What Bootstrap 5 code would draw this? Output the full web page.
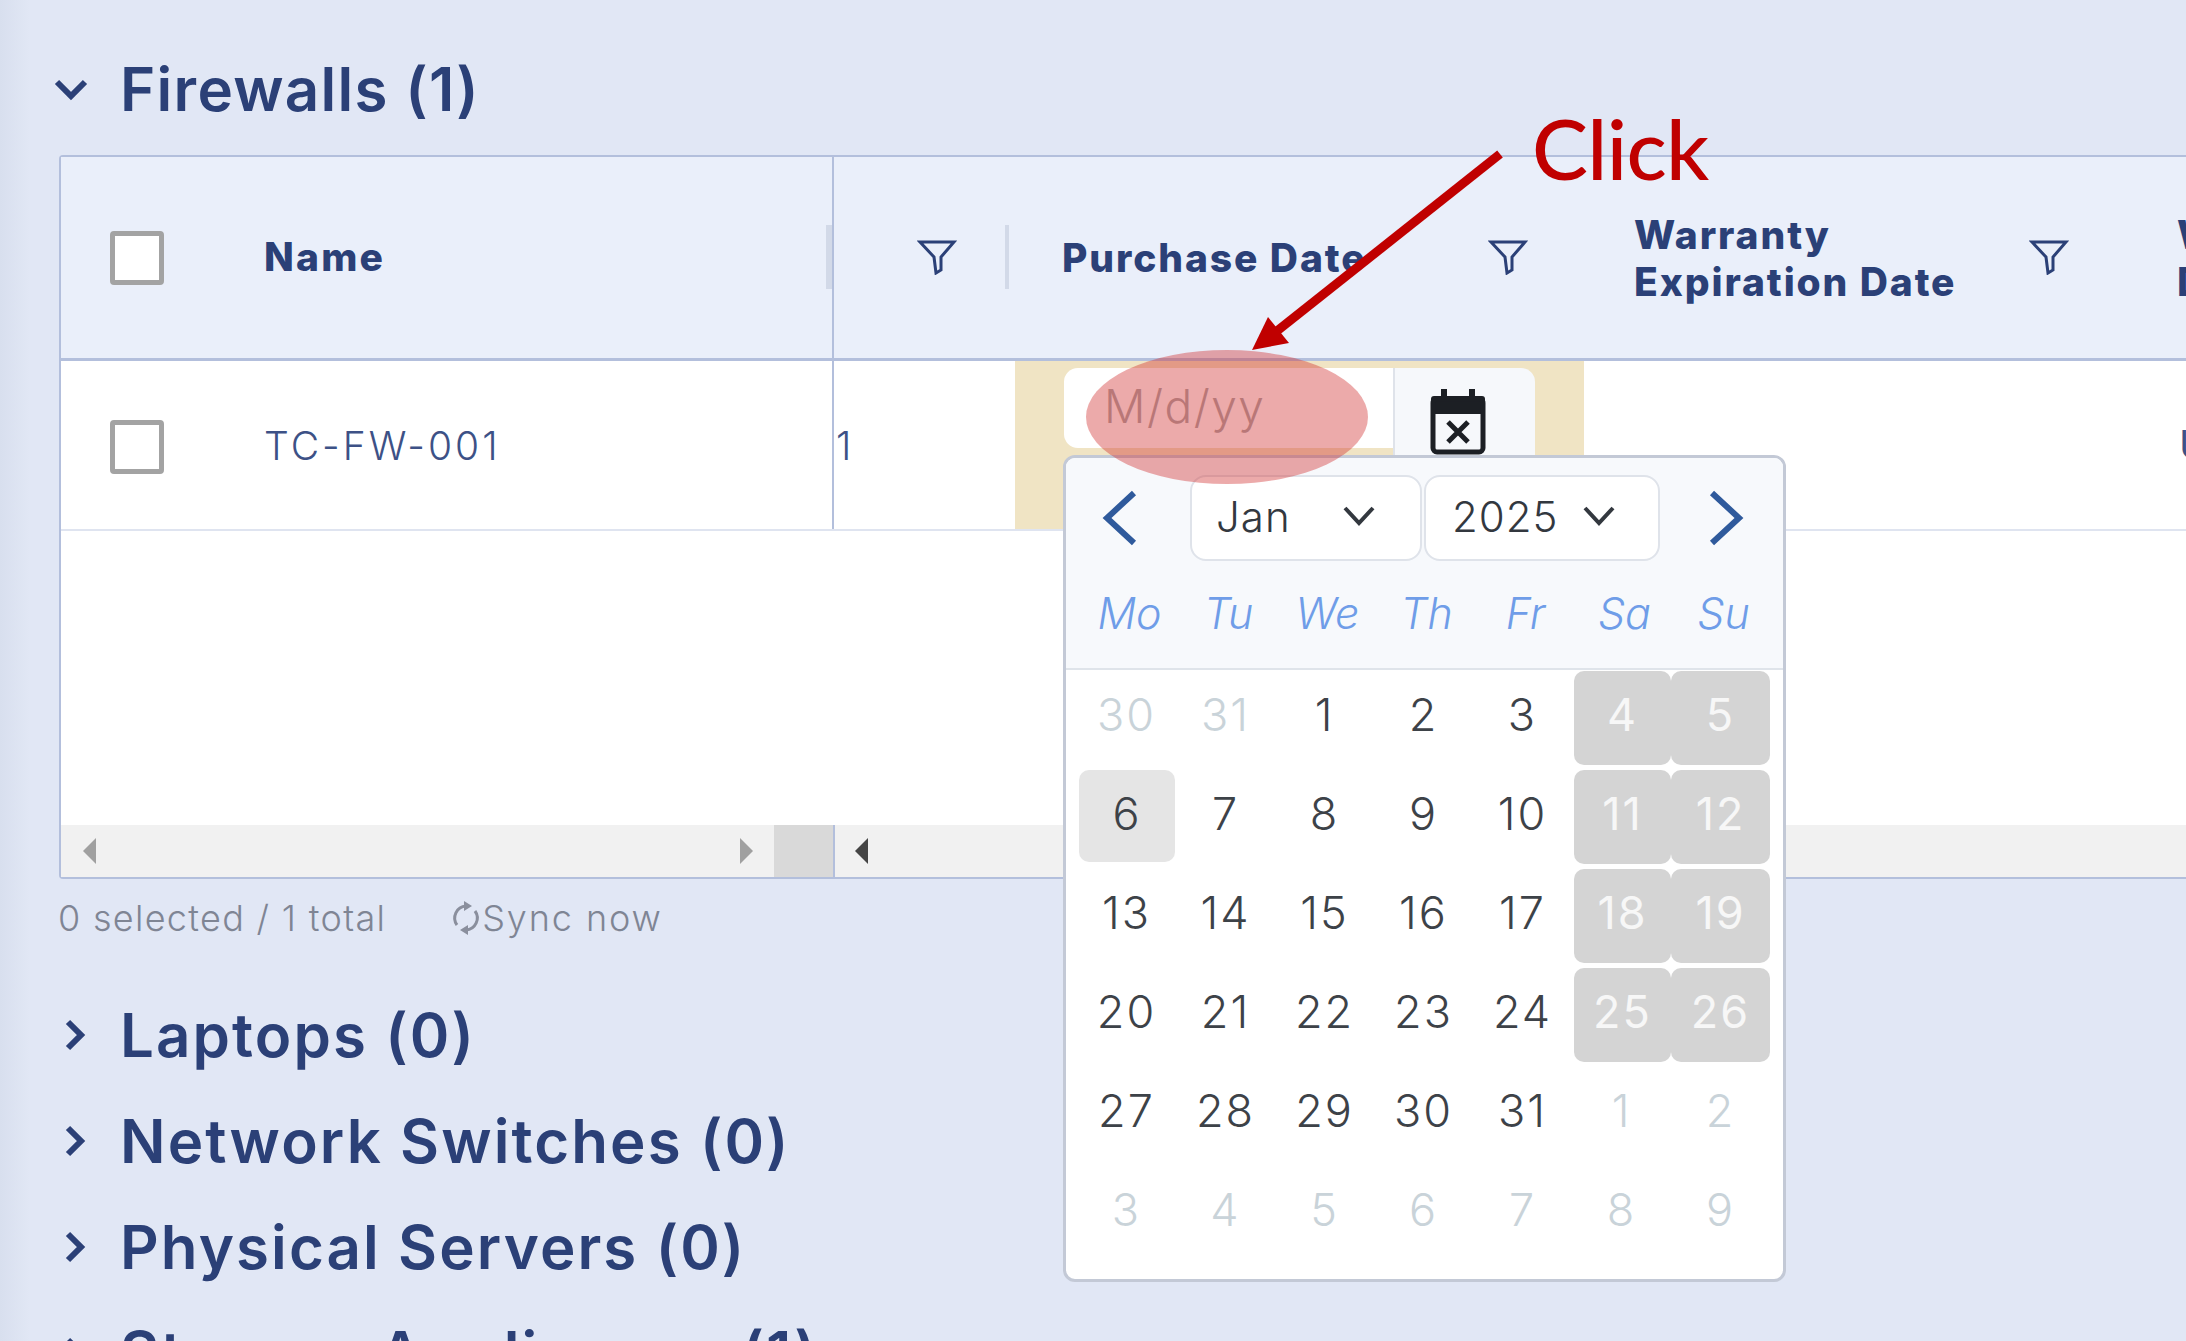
<!DOCTYPE html>
<html lang="en"><head><meta charset="utf-8"><title>Assets</title>
<link href="https://cdn.jsdelivr.net/npm/bootstrap@5.3.0/dist/css/bootstrap.min.css" rel="stylesheet">
<style>
html,body{height:100%}
body{margin:0;overflow:hidden;background:#e1e7f5;font-family:Inter,"Liberation Sans",sans-serif;color:#2b3f77}
.pagewrap{position:relative;width:2186px;height:1341px;overflow:hidden;background:linear-gradient(90deg,#d8dfee 0,#e1e7f5 30px)}
.content{padding:53px 0 0 59px}
.sec-title{font-size:60px;font-weight:600;line-height:72px;height:72px;color:#2b4077;letter-spacing:1.3px;margin-left:-5px;gap:32px;white-space:nowrap}
.chev{width:34px;flex:none}
.asset-grid{width:2300px;height:724px;background:#fff;border:2px solid #b3bfdc;border-right:0;border-radius:4px 0 0 4px;display:flex;flex-direction:column;margin-top:30px}
.ghead{height:204px;background:#eaeffa;border-bottom:3px solid #b3bfdc;display:flex;flex:none}
.grow-r{height:170px;border-bottom:2px solid #dfe4f0;display:flex;flex:none;font-size:39px}
.gbody{flex:1}
.gscroll{height:52px;background:#f1f1f1;display:flex;flex:none;align-items:center}
.c-fix{width:773px;flex:none;border-right:2px solid #b3bfdc;height:100%;display:flex;align-items:center;position:relative}
.grow-r .c-fix,.cell-one{padding-top:3px}
.tick{width:54px;height:54px;border:5px solid #a3a3a3;border-radius:4px;background:#fff;margin-left:49px;flex:none}
.hname{font-size:39px;font-weight:800;color:#2b4077;letter-spacing:2.2px;margin-left:100px}
.rname{font-size:39px;color:#3d5186;margin-left:100px;letter-spacing:3px;font-weight:300}
.rz{position:absolute;right:0;top:68px;width:6px;height:64px;background:#d2d9e8}
.hcell{height:100%;display:flex;align-items:center;flex:none;position:relative;font-size:39px;font-weight:800;color:#2b4077;line-height:47px;letter-spacing:1.9px;white-space:nowrap}
.rz2{position:absolute;left:171px;top:68px;width:4px;height:64px;background:#d2d9e8}
.c-a{width:175px}.c-p{width:572px;padding-left:53px}.c-w{width:562px;padding-left:53px}
.funnel{position:absolute;top:82px;width:40px;height:36px}
.c-a .funnel{left:83px}.c-p .funnel{left:479px}.c-w .funnel{left:448px}
.frag{margin-left:34px}
.cell-one{width:181px;color:#3d5186;display:flex;align-items:center;padding-left:2px;flex:none;font-weight:300}
.date-cell{width:569px;background:#f0e4c4;flex:none;padding:7px 0 0 49px;position:relative}
.dinput{width:471px;display:flex;align-items:flex-start}
.dinput span{flex:1;height:80px;font-size:46px;padding-left:40px;line-height:76px;color:#aaa;letter-spacing:1.5px;background:#fff;border-radius:14px 0 0 14px;font-weight:300}
.dbtn{width:142px;height:100px;background:#f6f8fb;border-left:2px solid #dfe3ea;border-radius:0 14px 0 0;display:flex;justify-content:center;padding:21px 14px 0 0;flex:none}
.ufrag{margin-left:595px;display:flex;align-items:center;color:#3d5186;width:400px}
.sb-l{width:713px;flex:none;display:flex;align-items:center;justify-content:space-between;padding:0 21px 0 22px}
.sb-thumb{width:59px;background:#d9d9d9;height:100%;flex:none}
.sb-div{width:2px;height:100%;background:#b3bfdc;flex:none}
.tri{width:0;height:0;border-top:13px solid transparent;border-bottom:13px solid transparent}
.tl{border-right:13px solid #a0a0a0}.tr{border-left:13px solid #a0a0a0}.td{border-right:13px solid #454545;margin-left:20px}
.statusline{font-size:36px;color:#7f8594;display:flex;height:48px;align-items:center;margin:15px 0 0 -1px;letter-spacing:1.3px;font-weight:300}
.sync{margin-left:65px;display:flex;align-items:center;gap:1px;letter-spacing:1.9px}
.collapsed-list{margin-top:40px}
.collapsed-list .sec-title{height:106px;line-height:106px;letter-spacing:2.1px}
.collapsed-list .chev{margin-left:3px;margin-right:-3px}
.cal{position:absolute;left:1063px;top:455px;width:723px;height:827px;background:#fff;border:3px solid #c3c9d6;border-radius:12px;overflow:hidden;z-index:3}
.cal-top{background:#f7f9fc;height:212px;border-bottom:2px solid #dfe4ea;padding:17px 0 0}
.cal-nav{display:flex;align-items:center;height:86px}
.sel{height:86px;background:#fff;border:2px solid #dfe3ea;border-radius:16px;display:flex;align-items:center;justify-content:space-between;font-size:42px;color:#33383f;flex:none;font-weight:300;letter-spacing:1px}
.s-m{width:232px;padding:0 44px 4px 24px}
.s-y{width:236px;margin-left:2px;padding:0 42px 4px 26px}
.arrow{flex:none;display:flex}
.a-prev{width:124px;padding-left:34px}.a-next{width:129px;padding-left:46px}
.wk{display:grid;grid-template-columns:repeat(7,99px);padding:26px 0 0 14px;font-size:43px;font-style:italic;color:#6f9de8;text-align:center;font-weight:300;line-height:52px}
.days{display:grid;grid-template-columns:repeat(7,99px);grid-auto-rows:99px;padding:0 0 0 11px;font-size:45px;color:#3d4248;text-align:center;font-weight:300}
.days div{height:92px;line-height:88px;border-radius:10px;margin:1px 1px 0 1px;letter-spacing:2px}
.days .off{color:#c9d3d9}.days .we{background:#d4d4d4;color:#f7f7f7;font-weight:400;margin-left:0;margin-right:0;height:94px}
.days .we:nth-child(7n+6){margin-left:2px}
.days .now{background:#e5e5e5;margin-left:2px}
.anno{position:absolute;left:0;top:0;z-index:5;pointer-events:none}
.click-t{position:absolute;left:1532px;top:98px;font-family:Lato,"Liberation Sans",sans-serif;font-size:84px;line-height:100px;color:#c00000;z-index:6;font-weight:500;letter-spacing:-.7px}
</style></head><body>
<div class="pagewrap">
<div class="content">
 <div class="sec-title d-flex align-items-center"><svg class="chev" viewBox="0 0 34 24" height="24"><path d="M3 5 17 19 31 5" fill="none" stroke="#2b4077" stroke-width="6"/></svg><span>Firewalls (1)</span></div>
 <div class="asset-grid">
  <div class="ghead">
   <div class="c-fix"><span class="tick"></span><span class="hname">Name</span><i class="rz"></i></div>
   <div class="hcell c-a"><svg class="funnel" viewBox="0 0 40 36"><path d="M3 3H37L24 18V31L19 34 17 18Z" fill="none" stroke="#2b4077" stroke-width="3"/></svg><i class="rz2"></i></div>
   <div class="hcell c-p">Purchase Date<svg class="funnel" viewBox="0 0 40 36"><path d="M3 3H37L24 18V31L19 34 17 18Z" fill="none" stroke="#2b4077" stroke-width="3"/></svg></div>
   <div class="hcell c-w"><span>Warranty<br>Expiration Date</span><svg class="funnel" viewBox="0 0 40 36"><path d="M3 3H37L24 18V31L19 34 17 18Z" fill="none" stroke="#2b4077" stroke-width="3"/></svg></div>
   <div class="hcell"><span class="frag">Warranty<br>Days</span></div>
  </div>
  <div class="grow-r">
   <div class="c-fix"><span class="tick"></span><span class="rname">TC-FW-001</span></div>
   <div class="cell-one">1</div>
   <div class="date-cell"><div class="dinput"><span>M/d/yy</span><div class="dbtn"><svg width="58" height="66" viewBox="0 0 58 66"><rect x="12" y="0" width="6" height="12" fill="#1c1f24"/><rect x="40" y="0" width="6" height="12" fill="#1c1f24"/><rect x="2" y="7" width="54" height="18" rx="3" fill="#1c1f24"/><rect x="4" y="10" width="50" height="53" rx="4" fill="none" stroke="#1c1f24" stroke-width="5"/><path d="M19 33 39 53M39 33 19 53" stroke="#1c1f24" stroke-width="5"/></svg></div></div></div>
   <div class="ufrag">U</div>
  </div>
  <div class="gbody"></div>
  <div class="gscroll">
   <div class="sb-l"><i class="tri tl"></i><i class="tri tr"></i></div><div class="sb-thumb"></div>
   <div class="sb-div"></div><i class="tri td"></i>
  </div>
 </div>
 <div class="statusline"><span>0 selected / 1 total</span><span class="sync"><svg width="30" height="34" viewBox="0 0 30 34"><path d="M6 24A12 12 0 0 1 15 5M24 10A12 12 0 0 1 15 29" fill="none" stroke="#8a8f9d" stroke-width="3"/><path d="M13 0 21 5 13 10ZM17 24 9 29 17 34Z" fill="#8a8f9d"/></svg>Sync now</span></div>
 <div class="collapsed-list">
  <div class="sec-title d-flex align-items-center"><svg class="chev" viewBox="0 0 34 34" height="34"><path d="M11 4 24 17 11 30" fill="none" stroke="#2b4077" stroke-width="6"/></svg><span>Laptops (0)</span></div>
  <div class="sec-title d-flex align-items-center"><svg class="chev" viewBox="0 0 34 34" height="34"><path d="M11 4 24 17 11 30" fill="none" stroke="#2b4077" stroke-width="6"/></svg><span>Network Switches (0)</span></div>
  <div class="sec-title d-flex align-items-center"><svg class="chev" viewBox="0 0 34 34" height="34"><path d="M11 4 24 17 11 30" fill="none" stroke="#2b4077" stroke-width="6"/></svg><span>Physical Servers (0)</span></div>
  <div class="sec-title d-flex align-items-center"><svg class="chev" viewBox="0 0 34 34" height="34"><path d="M11 4 24 17 11 30" fill="none" stroke="#2b4077" stroke-width="6"/></svg><span>Storage Appliances (1)</span></div>
 </div>
</div>
<div class="cal">
 <div class="cal-top">
  <div class="cal-nav">
   <div class="arrow a-prev"><svg width="40" height="56" viewBox="0 0 40 56"><path d="M34 3 7 28 34 53" fill="none" stroke="#2f5a9c" stroke-width="6"/></svg></div>
   <div class="sel s-m"><span>Jan</span><svg width="34" height="22" viewBox="0 0 34 22"><path d="M3 3 17 18 31 3" fill="none" stroke="#33383f" stroke-width="4"/></svg></div>
   <div class="sel s-y"><span>2025</span><svg width="34" height="22" viewBox="0 0 34 22"><path d="M3 3 17 18 31 3" fill="none" stroke="#33383f" stroke-width="4"/></svg></div>
   <div class="arrow a-next"><svg width="40" height="56" viewBox="0 0 40 56"><path d="M6 3 33 28 6 53" fill="none" stroke="#2f5a9c" stroke-width="6"/></svg></div>
  </div>
  <div class="wk"><span>Mo</span><span>Tu</span><span>We</span><span>Th</span><span>Fr</span><span>Sa</span><span>Su</span></div>
 </div>
 <div class="days">
  <div class="off">30</div><div class="off">31</div><div>1</div><div>2</div><div>3</div><div class="we">4</div><div class="we">5</div>
  <div class="now">6</div><div>7</div><div>8</div><div>9</div><div>10</div><div class="we">11</div><div class="we">12</div>
  <div>13</div><div>14</div><div>15</div><div>16</div><div>17</div><div class="we">18</div><div class="we">19</div>
  <div>20</div><div>21</div><div>22</div><div>23</div><div>24</div><div class="we">25</div><div class="we">26</div>
  <div>27</div><div>28</div><div>29</div><div>30</div><div>31</div><div class="off">1</div><div class="off">2</div>
  <div class="off">3</div><div class="off">4</div><div class="off">5</div><div class="off">6</div><div class="off">7</div><div class="off">8</div><div class="off">9</div>
 </div>
</div>
<svg class="anno" width="2186" height="1341" viewBox="0 0 2186 1341">
 <ellipse cx="1227" cy="417" rx="141" ry="67" fill="#cf2b2b" fill-opacity=".4"/>
 <path d="M1500 154 1272 335" stroke="#c00000" stroke-width="9" fill="none"/>
 <path d="M1252 350 1268 317 1289 343Z" fill="#c00000"/>
</svg>
<div class="click-t">Click</div>
</div>
<script src="https://cdn.jsdelivr.net/npm/bootstrap@5.3.0/dist/js/bootstrap.bundle.min.js"></script>
</body></html>
